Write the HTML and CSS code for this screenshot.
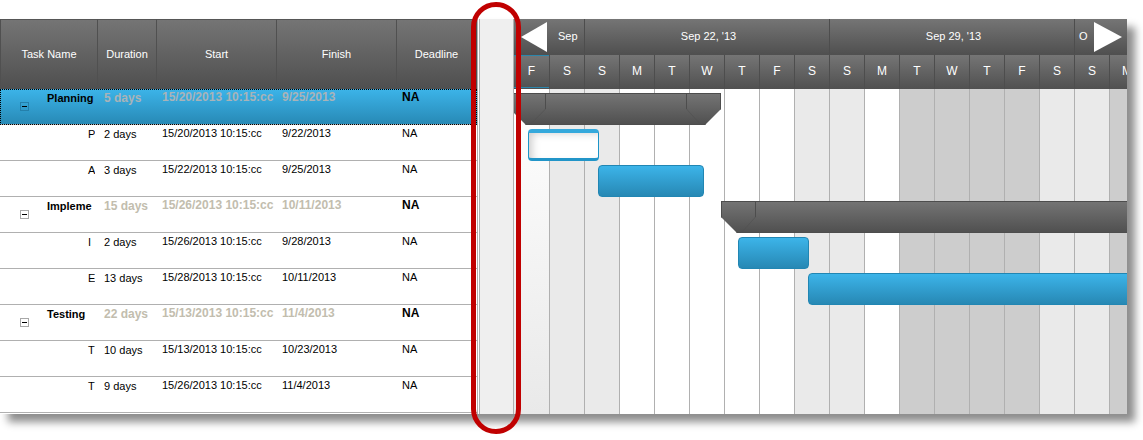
FILE: index.html
```html
<!DOCTYPE html>
<html lang="en">
<head>
<meta charset="utf-8">
<title>Project schedule</title>
<link rel="stylesheet" href="styles.css">
</head>
<body>
<main class="gantt">
  <table class="tasks">
    <colgroup><col class="c-name"><col class="c-duration"><col class="c-date"><col class="c-date"><col class="c-deadline"></colgroup>
    <thead>
      <tr><th>Task Name</th><th>Duration</th><th>Start</th><th>Finish</th><th>Deadline</th></tr>
    </thead>
    <tbody>
      <tr class="summary selected"><td><div class="name"><button class="toggle" aria-label="Collapse Planning"></button><span>Planning</span></div></td><td class="low">5 days</td><td>15/20/2013 10:15:cc</td><td>9/25/2013</td><td>NA</td></tr>
      <tr><td><div class="name">P</div></td><td class="low">2 days</td><td>15/20/2013 10:15:cc</td><td>9/22/2013</td><td>NA</td></tr>
      <tr><td><div class="name">A</div></td><td class="low">3 days</td><td>15/22/2013 10:15:cc</td><td>9/25/2013</td><td>NA</td></tr>
      <tr class="summary"><td><div class="name"><button class="toggle" aria-label="Collapse Implementation"></button><span>Impleme</span></div></td><td class="low">15 days</td><td>15/26/2013 10:15:cc</td><td>10/11/2013</td><td>NA</td></tr>
      <tr><td><div class="name">I</div></td><td class="low">2 days</td><td>15/26/2013 10:15:cc</td><td>9/28/2013</td><td>NA</td></tr>
      <tr><td><div class="name">E</div></td><td class="low">13 days</td><td>15/28/2013 10:15:cc</td><td>10/11/2013</td><td>NA</td></tr>
      <tr class="summary"><td><div class="name"><button class="toggle" aria-label="Collapse Testing"></button><span>Testing</span></div></td><td class="low">22 days</td><td>15/13/2013 10:15:cc</td><td>11/4/2013</td><td>NA</td></tr>
      <tr><td><div class="name">T</div></td><td class="low">10 days</td><td>15/13/2013 10:15:cc</td><td>10/23/2013</td><td>NA</td></tr>
      <tr><td><div class="name">T</div></td><td class="low">9 days</td><td>15/26/2013 10:15:cc</td><td>11/4/2013</td><td>NA</td></tr>
    </tbody>
  </table>

  <div class="splitter"><div class="callout"></div></div>

  <section class="chart">
    <div class="weeks">
      <div class="week first">Sep</div><div class="week">Sep 22, '13</div><div class="week">Sep 29, '13</div><div class="week last">O</div>
      <button class="scroll prev" aria-label="Earlier"><svg width="28" height="30" viewBox="0 0 28 30"><path d="M1 15 27 0v30z" fill="#fff"/></svg></button>
      <button class="scroll next" aria-label="Later"><svg width="28" height="30" viewBox="0 0 28 30"><path d="M28 15 0 0v30z" fill="#fff"/></svg></button>
    </div>
    <div class="days">
      <div class="day today">F</div><div class="day">S</div><div class="day">S</div><div class="day">M</div><div class="day">T</div><div class="day">W</div><div class="day">T</div><div class="day">F</div><div class="day">S</div><div class="day">S</div><div class="day">M</div><div class="day">T</div><div class="day">W</div><div class="day">T</div><div class="day">F</div><div class="day">S</div><div class="day">S</div><div class="day">M</div>
    </div>
    <div class="plot">
      <div class="columns">
        <i class="col now"></i><i class="col weekend"></i><i class="col weekend"></i><i class="col"></i><i class="col"></i><i class="col"></i><i class="col"></i><i class="col"></i><i class="col weekend"></i><i class="col weekend"></i><i class="col"></i><i class="col off"></i><i class="col off"></i><i class="col off"></i><i class="col off"></i><i class="col weekend"></i><i class="col weekend"></i><i class="col off"></i>
      </div>
      <div class="bars">
        <div class="lane"><div class="group" style="margin-left:-4px;width:211px">
          <svg width="36" height="32" viewBox="0 0 36 32"><path class="edge" d="M35.500 0V16"/><path class="fold" d="M35.500 16 20 32"/></svg>
          <svg width="36" height="32" viewBox="0 0 36 32"><path class="edge" d="M1.500 0V16"/><path class="fold" d="M1.500 16 16 32"/></svg>
        </div></div>
        <div class="lane"><div class="task hollow" style="margin-left:14px;width:71px"></div></div>
        <div class="lane"><div class="task" style="margin-left:84px;width:106px"></div></div>
        <div class="lane"><div class="group" style="margin-left:207px;width:560px">
          <svg width="36" height="32" viewBox="0 0 36 32"><path class="edge" d="M34.500 0V16"/><path class="fold" d="M34.500 16 20 32"/></svg>
        </div></div>
        <div class="lane"><div class="task" style="margin-left:224px;width:71px"></div></div>
        <div class="lane"><div class="task" style="margin-left:294px;width:455px"></div></div>
      </div>
    </div>
  </section>
</main>
</body>
</html>
```
FILE: styles.css
```css
* { box-sizing: border-box; }

body {
  margin: 0;
  padding: 19px 16px 26px 0;
  background: #fff;
  color: #000;
  font: 11px/13px "Liberation Sans", Arial, sans-serif;
}

button { padding: 0; border: 0; background: none; font: inherit; cursor: pointer; }

.gantt {
  display: flex;
  align-items: stretch;
  padding-bottom: 1px;
  background: linear-gradient(#b0b0b0, #b0b0b0) 477px 0 / 1px 100% no-repeat #fff;
  box-shadow: 8px 8px 8px rgba(0, 0, 0, .45);
}

/* Task table */
.tasks {
  flex: none;
  width: 478px;
  table-layout: fixed;
  border-collapse: separate;
  border-spacing: 0;
  border-right: 1px solid #b0b0b0;
}
.c-name { width: 98px; }
.c-duration { width: 59px; }
.c-date { width: 120px; }
.c-deadline { width: 80px; }

.tasks thead tr { background: linear-gradient(#757575, #4f4f4f); }
.tasks th {
  height: 70px;
  padding: 0;
  border-top: 1px solid #555;
  border-right: 1px solid #505050;
  color: #fff;
  font-weight: normal;
}
.tasks th:first-child { border-left: 1px solid #505050; }

.tasks td {
  height: 36px;
  padding: 2px 0 0 5px;
  border-bottom: 1px solid #b0b0b0;
  vertical-align: top;
  white-space: nowrap;
}
.tasks td.low { padding: 3px 0 0 6px; }
.tasks td:first-child { padding: 3px 3px 0 20px; }

.name { padding-left: 68px; overflow: hidden; }
.summary .name { display: flex; gap: 18px; padding-left: 0; font-weight: bold; }
.summary td { color: #c2bdae; font-size: 12px; font-weight: bold; }
.summary td:first-child { color: #000; font-size: 11px; }
.summary td:last-child { color: #000; }

.selected { background: linear-gradient(#3cb4e9, #2788b4); outline: 1px dotted #000; outline-offset: -1px; }
.selected td { color: #a9b3b8; }

.toggle {
  flex: none;
  width: 9px;
  height: 9px;
  margin-top: 10px;
  border: 1px solid #a8a8a8;
  background: linear-gradient(#000, #000) center / 5px 1px no-repeat;
}
.selected .toggle { border-color: #2480ab; }

/* Splitter */
.splitter {
  position: relative;
  z-index: 1;
  flex: none;
  width: 36px;
  margin-bottom: -1px;
  border-left: 1px solid #fff;
  border-right: 1px solid #b0b0b0;
  background: #efefef;
  box-shadow: inset 1px 0 #b0b0b0;
}
.callout {
  position: absolute;
  inset: -17px -8px -20px;
  border: 5px solid #c00000;
  border-radius: 26px;
}

/* Time chart */
.chart {
  flex: 1;
  min-width: 0;
  display: flex;
  flex-direction: column;
  margin-bottom: -1px;
  overflow: hidden;
  color: #fff;
}
.weeks, .days { display: flex; background: linear-gradient(#757575, #505050); }
.weeks { position: relative; height: 36px; border-bottom: 1px solid #505050; }
.week {
  flex: none;
  width: 245px;
  padding: 11px 0 0 3px;
  border-right: 1px solid #4d4d4d;
  text-align: center;
}
.week.first { width: 71px; padding-left: 44px; text-align: left; }
.week.last { padding-left: 4px; text-align: left; }
.scroll { position: absolute; top: 3px; height: 30px; line-height: 0; }
.prev { left: 6px; }
.next { right: 5px; }

.days { height: 34px; font-size: 12px; }
.day {
  flex: none;
  width: 35px;
  padding-top: 10px;
  border-right: 1px solid #4d4d4d;
  text-align: center;
}
.day.today {
  width: 36px;
  background:
    linear-gradient(#2b86ac, #2b86ac) 0 0 / 100% 1px no-repeat,
    linear-gradient(#2b86ac, #2b86ac) 0 32px / 100% 1px no-repeat;
}

.plot { flex: 1; display: grid; grid-template-columns: minmax(0, 1fr); }
.columns, .bars { grid-area: 1 / 1; min-width: 0; }
.columns { display: flex; background: #fff; }
.col { flex: none; width: 35px; border-right: 1px solid #b0b0b0; }
.col.now { width: 36px; background: linear-gradient(#fff, #e9e9e9); }
.col.weekend { background: #eaeaea; }
.col.off { background: #cdcdcd; }

.lane { height: 36px; padding-top: 4px; }
.task {
  height: 32px;
  border: 1px solid #2186b3;
  border-radius: 4px;
  background: linear-gradient(#3cb4e9, #2788b4);
}
.task.hollow {
  border-color: #1c94c8;
  border-top: 4px solid #35a9dc;
  border-bottom: 3px solid #2295c8;
  background: #fff;
  box-shadow: inset 6px 3px 8px -3px #ccc;
}
.group {
  display: flex;
  justify-content: space-between;
  height: 32px;
  background: linear-gradient(#757575, #4f4f4f);
  box-shadow: inset 0 0 0 1px #4d4d4d;
  clip-path: polygon(0 0, 100% 0, 100% 16px, calc(100% - 16px) 100%, 16px 100%, 0 16px);
}
.edge { stroke: #4d4d4d; fill: none; }
.fold { stroke: #505050; fill: none; stroke-width: .6; }
```
